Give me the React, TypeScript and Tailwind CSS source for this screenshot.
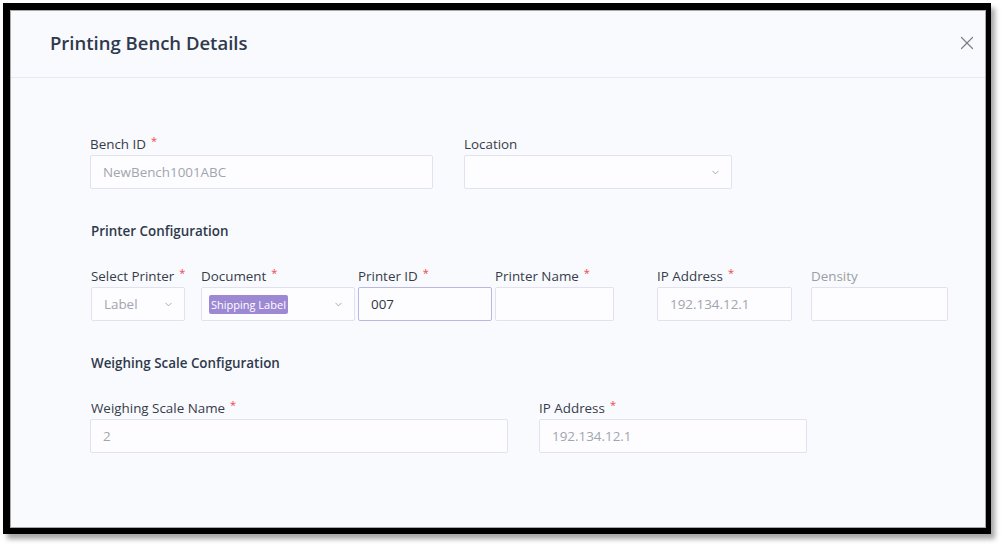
import React from 'react';
import { X, ChevronDown } from 'lucide-react';

const Label: React.FC<{ text: string; required?: boolean; muted?: boolean }> = ({ text, required, muted }) => (
    <div className={`h-[18px] leading-[18px] text-[13.4px] mb-[2px] whitespace-nowrap ${muted ? 'text-[#9a9ea8]' : 'text-[#363c4a]'}`}>
        {text}
        {required && <span className="text-[#f0474b] text-[11px] align-top relative -top-[3px] ml-[5px]">*</span>}
    </div>
);

const Input: React.FC<{ value?: string; dark?: boolean; focused?: boolean; className?: string }> = ({ value, dark, focused, className }) => (
    <div
        className={`h-[34px] flex items-center px-[12px] text-[13.4px] bg-[#fdfdff] rounded-[2px] border ${
            focused ? 'border-[#b9b8e2]' : 'border-[#e1e1f0]'
        } ${dark ? 'text-[#2f3542]' : 'text-[#a1a5ad]'} ${className ?? ''}`}
    >
        {value}
    </div>
);

const Select: React.FC<{ value?: React.ReactNode; className?: string; pad?: string }> = ({ value, className, pad }) => (
    <div className={`h-[34px] flex items-center justify-between bg-[#fdfdff] rounded-[2px] border border-[#e1e1f0] text-[13.4px] text-[#a1a5ad] ${pad ?? 'pl-[12px] pr-[10px]'} ${className ?? ''}`}>
        <span>{value}</span>
        <ChevronDown className="w-[11px] h-[11px] text-[#8b8f9c]" strokeWidth={1.6} />
    </div>
);

export default function App() {
    return (
        <div className="w-[1004px] h-[547px] bg-white pl-[3px] pt-[3px]" style={{ fontFamily: '"Open Sans", "Noto Sans", sans-serif' }}>
            <div className="w-[988px] h-[531px] border-black border-l-[7px] border-t-[7px] border-r-[5px] border-b-[6px] shadow-[4px_5px_5px_rgba(0,0,0,0.35)]">
                <div className="w-full h-full border border-[#a9a9a9] bg-[#f9fafd] flex flex-col">
                    {/* Header */}
                    <div className="h-[67px] shrink-0 border-b border-[#e6e8f2] flex items-center justify-between pl-[39px] pr-[7px] pb-[3px]">
                        <h2 className="text-[18.5px] font-semibold text-[#2f394c]">Printing Bench Details</h2>
                        <X className="w-[22px] h-[22px] text-[#7b7f88]" strokeWidth={1.3} />
                    </div>

                    {/* Body */}
                    <div className="pt-[57px] pl-[79px]">
                        <div className="flex gap-[31px]">
                            <div className="w-[343px]">
                                <Label text="Bench ID" required />
                                <Input value="NewBench1001ABC" />
                            </div>
                            <div className="w-[268px]">
                                <Label text="Location" />
                                <Select value="" />
                            </div>
                        </div>

                        <h3 className="mt-[33px] ml-[1px] h-[18px] leading-[18px] text-[13.4px] font-semibold text-[#2f394c]">Printer Configuration</h3>

                        <div className="flex mt-[27px] ml-[1px]">
                            <div className="w-[94px]">
                                <Label text="Select Printer" required />
                                <Select value="Label" />
                            </div>
                            <div className="w-[154px] ml-[16px]">
                                <Label text="Document" required />
                                <Select
                                    pad="pl-[7px] pr-[10px]"
                                    value={<span className="bg-[#9d88d4] text-white text-[11px] px-[2px] py-[2px] rounded-[2px]">Shipping Label</span>}
                                />
                            </div>
                            <div className="w-[134px] ml-[3px]">
                                <Label text="Printer ID" required />
                                <Input value="007" dark focused />
                            </div>
                            <div className="w-[119px] ml-[3px]">
                                <Label text="Printer Name" required />
                                <Input />
                            </div>
                            <div className="w-[135px] ml-[43px]">
                                <Label text="IP Address" required />
                                <Input value="192.134.12.1" />
                            </div>
                            <div className="w-[137px] ml-[19px]">
                                <Label text="Density" muted />
                                <Input />
                            </div>
                        </div>

                        <h3 className="mt-[33px] ml-[1px] h-[18px] leading-[18px] text-[13.4px] font-semibold text-[#2f394c]">Weighing Scale Configuration</h3>

                        <div className="flex gap-[31px] mt-[27px]">
                            <div className="w-[418px]">
                                <div className="ml-[1px]"><Label text="Weighing Scale Name" required /></div>
                                <Input value="2" />
                            </div>
                            <div className="w-[268px]">
                                <Label text="IP Address" required />
                                <Input value="192.134.12.1" />
                            </div>
                        </div>
                    </div>
                </div>
            </div>
        </div>
    );
}
